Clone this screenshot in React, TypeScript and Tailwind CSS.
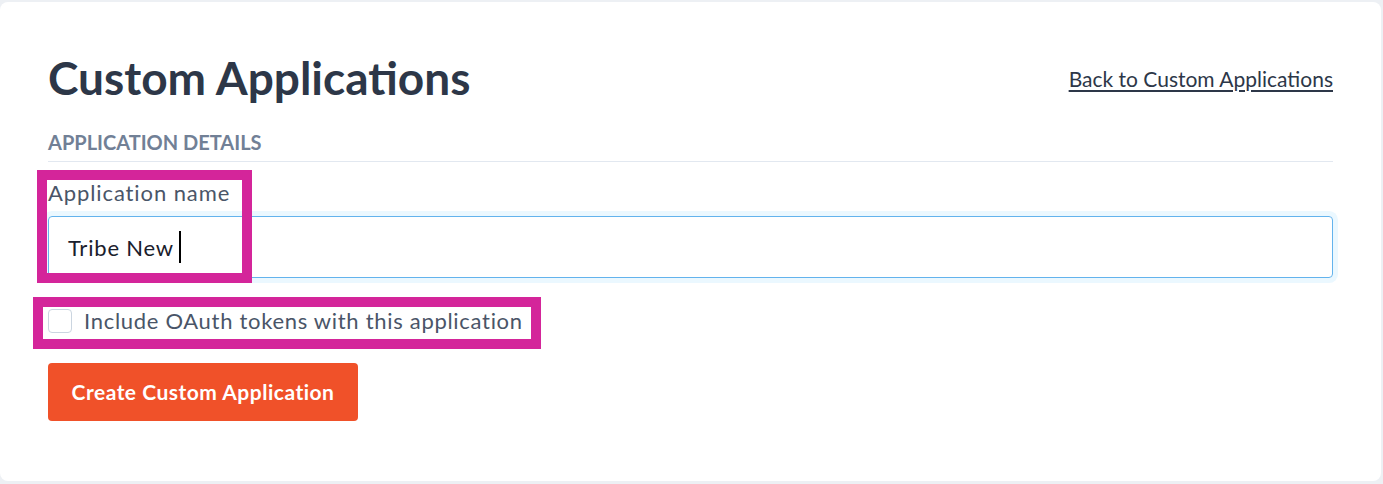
import React from 'react';

const Annotation: React.FC<{ className: string }> = ({ className }) => (
  <div className={`absolute border-[10px] border-[#d4259a] pointer-events-none ${className}`} />
);

const App: React.FC = () => {
  return (
    <div className="min-h-screen bg-[#edf0f4] pt-[2px] pr-[2px] pb-[3px] font-['Lato',sans-serif]">
      <div className="relative h-[479px] bg-white rounded-lg px-12 pt-[53px]">
        <div className="flex items-center justify-between">
          <h1 className="text-[46px] leading-none font-bold text-[#2d3748]">Custom Applications</h1>
          <a href="#" className="text-[21px] leading-none text-[#2d3748] underline underline-offset-[3px]">
            Back to Custom Applications
          </a>
        </div>

        <div className="mt-[31px] pb-[9px] border-b border-[#e2e8f0]">
          <h2 className="text-[20px] leading-none font-bold uppercase text-[#718096]">Application Details</h2>
        </div>

        <label className="block mt-[20px] text-[22px] leading-none tracking-[0.9px] text-[#4a5568]">
          Application name
        </label>

        <div className="mt-[12px] h-[62px] flex items-center rounded border border-[#63b3ed] ring-[5px] ring-[#ebf8ff] pl-[19px]">
          <span className="text-[22px] tracking-[0.8px] text-[#1a202c]">Tribe New</span>
          <span className="ml-[5px] w-[2px] h-[32px] bg-black" />
        </div>

        <label className="mt-[31px] flex items-center gap-3">
          <span className="w-6 h-6 rounded border border-[#cbd5e0] bg-white" />
          <span className="text-[22px] leading-none tracking-[0.7px] text-[#4a5568]">
            Include OAuth tokens with this application
          </span>
        </label>

        <button className="mt-[30px] h-[58px] w-[310px] rounded bg-[#f05129] text-white text-[21px] tracking-[0.5px] font-bold">
          Create Custom Application
        </button>

        <Annotation className="left-[37px] top-[168px] w-[215px] h-[113px]" />
        <Annotation className="left-[33px] top-[295px] w-[508px] h-[52px]" />
      </div>
    </div>
  );
};

export default App;
